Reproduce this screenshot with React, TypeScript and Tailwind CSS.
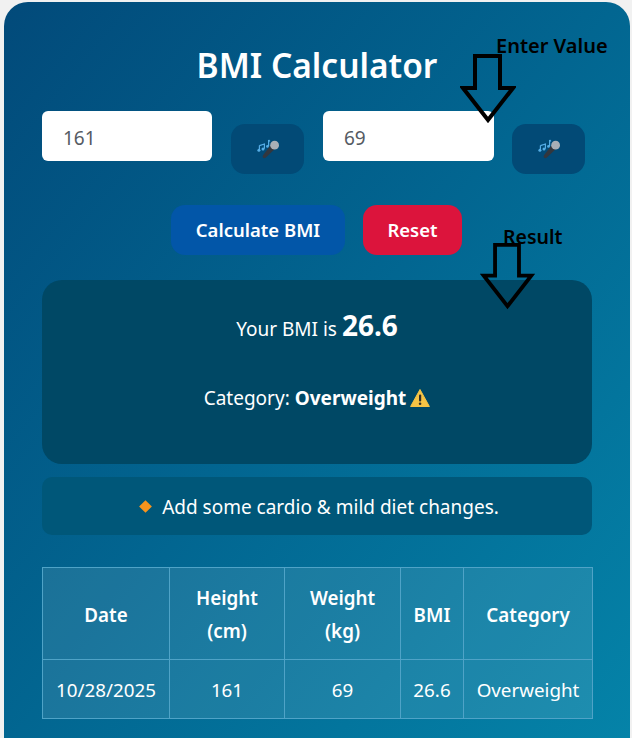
const font = "[font-family:'Noto_Sans','Open_Sans',sans-serif]";

function Mic() {
  return (
    <svg width="24" height="20" viewBox="0 0 24 20" aria-hidden="true">
      <path d="M3.4 6.6 L8.4 5 V9.8 M3.4 6.6 V11" stroke="#55ade6" strokeWidth="1.2" fill="none" />
      <circle cx="2.9" cy="11.2" r="1.5" fill="#55ade6" />
      <circle cx="7" cy="10" r="1.5" fill="#55ade6" />
      <path d="M12.6 1 V7 M12.6 1 L14 2.4" stroke="#55ade6" strokeWidth="1.2" fill="none" />
      <circle cx="11.5" cy="7.4" r="1.4" fill="#55ade6" />
      <path d="M14.4 6.4 L18.6 10.2 L9.6 18.8 Q8.2 19.8 7 18.6 Q6 17.4 7.2 16 Z" fill="#33373e" />
      <circle cx="18.6" cy="6.2" r="4.4" fill="#a9afb6" />
    </svg>
  );
}

function Warning() {
  return (
    <svg width="20" height="20" viewBox="0 0 20 20" aria-hidden="true">
      <path d="M10 1.5 L19.4 18.5 H0.6 Z" fill="#f6c445" stroke="#f6c445" strokeWidth="1" strokeLinejoin="round" />
      <rect x="9" y="6.5" width="2.2" height="7" rx="1" fill="#33302a" />
      <circle cx="10.1" cy="15.7" r="1.3" fill="#33302a" />
    </svg>
  );
}

function Arrow({ className }: { className: string }) {
  return (
    <svg className={className} viewBox="0 0 56 70" fill="none" aria-hidden="true">
      <path d="M15 2 H40 V34 H53 L28 66 L3 34 H15 Z" stroke="#000" strokeWidth="4" strokeLinejoin="miter" />
    </svg>
  );
}

const th = "border border-[#4fa3c7] font-semibold text-[18.8px] leading-[33px] text-center px-2 pt-[3px]";
const td = "border border-[#4fa3c7] font-normal text-[18.8px] text-center px-0 pt-[2px] h-[59px]";

export default function App() {
  return (
    <div className={`relative min-h-[738px] bg-[#f1f1f1] pt-[2px] pl-[4px] overflow-hidden ${font}`}>
      <div className="w-[626px] h-[760px] rounded-[24px] bg-gradient-to-br from-[#024a7a] to-[#0584a9] px-[38px] text-white">
        <h1 className="pt-[37px] h-[109px] text-center text-[33.5px] leading-[52px] font-semibold">BMI Calculator</h1>

        <div className="flex items-start gap-[19px]">
          <input
            readOnly
            value="161"
            className="w-[170px] h-[50px] rounded-[6px] bg-white px-[21px] pt-[4px] text-[19px] text-[#555b63] outline-none"
          />
          <button className="mt-[13px] w-[73px] h-[50px] rounded-[14px] bg-[#024a76] flex items-center justify-center">
            <Mic />
          </button>
          <input
            readOnly
            value="69"
            className="w-[171px] h-[50px] rounded-[6px] bg-white px-[21px] pt-[4px] text-[19px] text-[#555b63] outline-none"
          />
          <button className="-ml-px mt-[13px] w-[73px] h-[50px] rounded-[14px] bg-[#024a76] flex items-center justify-center">
            <Mic />
          </button>
        </div>

        <div className="mt-[31px] flex pl-[129px] gap-[18px]">
          <button className="w-[174px] h-[50px] rounded-[14px] bg-[#0256a8] text-[18.5px] font-semibold">Calculate BMI</button>
          <button className="w-[99px] h-[50px] rounded-[14px] bg-[#dc143c] text-[18.5px] font-semibold">Reset</button>
        </div>

        <div className="mt-[25px] h-[184px] rounded-[20px] bg-[#004865] flex flex-col items-center">
          <p className="mt-[25px] h-[40px] text-[19px] leading-[40px]">
            Your BMI is <strong className="text-[28px] font-bold">26.6</strong>
          </p>
          <p className="mt-[38px] text-[19px] leading-[30px] flex items-center gap-[4px]">
            <span>
              Category: <strong className="font-bold">Overweight</strong>
            </span>
            <Warning />
          </p>
        </div>

        <div className="mt-[13px] h-[58px] rounded-[10px] bg-[#005779] pl-[6px] flex items-center justify-center gap-[12px] text-[19px]">
          <span className="w-[9px] h-[9px] rotate-45 bg-[#f7941d]" />
          <span className="translate-y-[1px]">Add some cardio &amp; mild diet changes.</span>
        </div>

        <table className="mt-[32px] w-[550px] table-fixed border-collapse bg-white/10">
          <thead>
            <tr className="h-[92px]">
              <th className={`${th} w-[127px]`}>Date</th>
              <th className={`${th} w-[115px]`}>Height (cm)</th>
              <th className={`${th} w-[116px]`}>Weight (kg)</th>
              <th className={`${th} w-[63px]`}>BMI</th>
              <th className={`${th} w-[129px]`}>Category</th>
            </tr>
          </thead>
          <tbody>
            <tr>
              <td className={td}>10/28/2025</td>
              <td className={td}>161</td>
              <td className={td}>69</td>
              <td className={td}>26.6</td>
              <td className={td}>Overweight</td>
            </tr>
          </tbody>
        </table>
      </div>

      <span className="absolute left-[496px] top-[32px] text-[20px] leading-[28px] font-semibold text-black">Enter Value</span>
      <Arrow className="absolute left-[460px] top-[54px] w-[56px] h-[70px]" />
      <span className="absolute left-[503px] top-[223px] text-[19.5px] leading-[28px] font-semibold text-black">Result</span>
      <Arrow className="absolute left-[480px] top-[243px] w-[55px] h-[67px]" />
    </div>
  );
}
